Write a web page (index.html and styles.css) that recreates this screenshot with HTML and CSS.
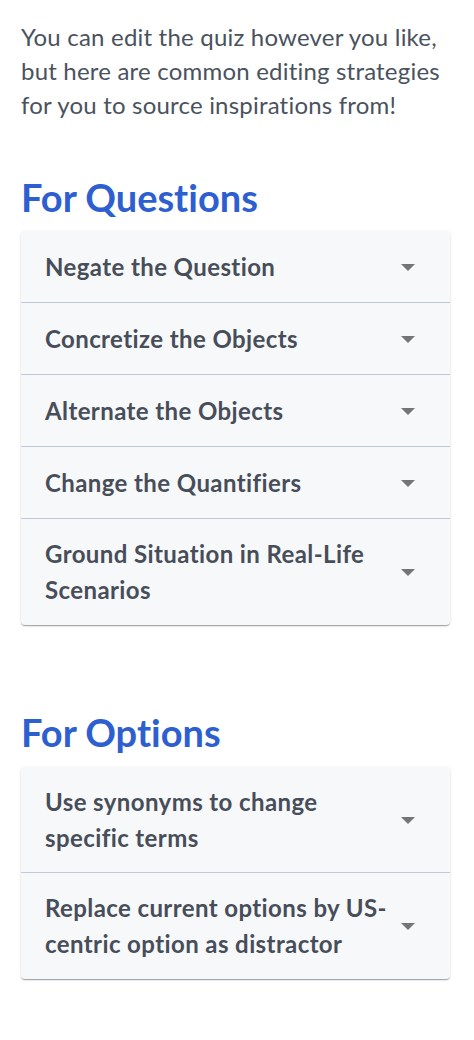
FILE: index.html
```html
<!DOCTYPE html>
<html>
<head>
<meta charset="utf-8">
<link rel="stylesheet" href="styles.css">
</head>
<body>
<main class="page">
  <p class="intro">You can edit the quiz however you like, but here are common editing strategies for you to source inspirations from!</p>

  <h2 class="section-title first">For Questions</h2>
  <div class="accordion">
    <div class="row"><span class="label">Negate the Question</span><span class="icon"><svg width="14" height="7" viewBox="0 0 14 7"><polygon points="0,0 14,0 7,7" fill="#757575"/></svg></span></div>
    <div class="row"><span class="label">Concretize the Objects</span><span class="icon"><svg width="14" height="7" viewBox="0 0 14 7"><polygon points="0,0 14,0 7,7" fill="#757575"/></svg></span></div>
    <div class="row"><span class="label">Alternate the Objects</span><span class="icon"><svg width="14" height="7" viewBox="0 0 14 7"><polygon points="0,0 14,0 7,7" fill="#757575"/></svg></span></div>
    <div class="row"><span class="label">Change the Quantifiers</span><span class="icon"><svg width="14" height="7" viewBox="0 0 14 7"><polygon points="0,0 14,0 7,7" fill="#757575"/></svg></span></div>
    <div class="row"><span class="label">Ground Situation in Real-Life Scenarios</span><span class="icon"><svg width="14" height="7" viewBox="0 0 14 7"><polygon points="0,0 14,0 7,7" fill="#757575"/></svg></span></div>
  </div>

  <h2 class="section-title second">For Options</h2>
  <div class="accordion">
    <div class="row"><span class="label">Use synonyms to change specific terms</span><span class="icon"><svg width="14" height="7" viewBox="0 0 14 7"><polygon points="0,0 14,0 7,7" fill="#757575"/></svg></span></div>
    <div class="row"><span class="label">Replace current options by US-centric option as distractor</span><span class="icon"><svg width="14" height="7" viewBox="0 0 14 7"><polygon points="0,0 14,0 7,7" fill="#757575"/></svg></span></div>
  </div>
</main>
</body>
</html>
```
FILE: styles.css
```css
* { box-sizing: border-box; }
html, body { margin: 0; padding: 0; background: #ffffff; }
body {
  font-family: Lato, "Open Sans", sans-serif;
  font-variant-ligatures: none;
}
.page { padding: 20px 24px 40px 21px; }
.intro {
  margin: 0;
  font-size: 24px;
  line-height: 34px;
  letter-spacing: 0.2px;
  color: #4a525e;
}
.section-title {
  margin: 0;
  font-size: 38px;
  line-height: 44px;
  font-weight: 700;
  color: #2e5fd0;
}
.section-title.first { margin-top: 53px; margin-bottom: 12px; }
.section-title.second { margin-top: 85px; margin-bottom: 13px; }
.accordion {
  background: #f7f8fa;
  border-radius: 4px;
  box-shadow: 0 2px 1px -1px rgba(0,0,0,0.2), 0 1px 1px 0 rgba(0,0,0,0.14), 0 1px 3px 0 rgba(0,0,0,0.12);
}
.row {
  display: flex;
  align-items: center;
  min-height: 72px;
  padding: 17px 30px 16px 24px;
  border-bottom: 1px solid #c3c9d3;
}
.row:last-child { border-bottom: none; padding-bottom: 17px; }
.label {
  flex: 1;
  font-size: 24px;
  line-height: 36px;
  font-weight: 700;
  letter-spacing: 0.4px;
  color: #474e59;
  padding-right: 8px;
}
.icon {
  width: 24px;
  display: flex;
  justify-content: center;
}
.icon svg { display: block; }
```
